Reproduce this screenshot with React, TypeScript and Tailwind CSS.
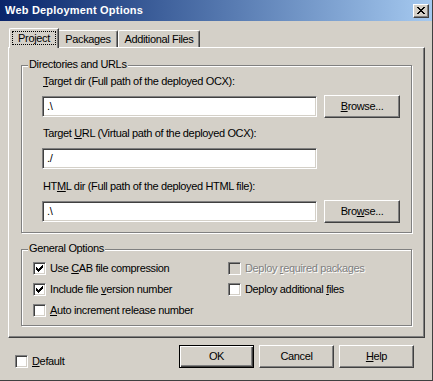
import type { ReactNode } from 'react';

const raised =
  'border border-t-white border-l-white border-r-[#404040] border-b-[#404040] shadow-[inset_-1px_-1px_0_#808080]';
const sunken =
  'border border-t-[#808080] border-l-[#808080] border-r-white border-b-white shadow-[inset_1px_1px_0_#404040,inset_-1px_-1px_0_#d4d0c8]';

const Key = ({ children }: { children: ReactNode }) => <span className="underline underline-offset-[1px]">{children}</span>;

const CheckMark = () => (
  <svg width="7" height="7" viewBox="0 0 7 7" shapeRendering="crispEdges">
    <path
      d="M0 2h1v3H0z M1 3h1v3H1z M2 4h1v3H2z M3 3h1v3H3z M4 2h1v3H4z M5 1h1v3H5z M6 0h1v3H6z"
      fill="#000"
    />
  </svg>
);

const CloseGlyph = () => (
  <svg width="8" height="7" viewBox="0 0 8 7" shapeRendering="crispEdges">
    <path
      d="M0 0h2v1H0zM6 0h2v1H6zM1 1h2v1H1zM5 1h2v1H5zM2 2h4v1H2zM3 3h2v1H3zM2 4h4v1H2zM1 5h2v1H1zM5 5h2v1H5zM0 6h2v1H0zM6 6h2v1H6z"
      fill="#000"
    />
  </svg>
);

function CheckBox({
  checked = false,
  disabled = false,
  children,
}: {
  checked?: boolean;
  disabled?: boolean;
  children: ReactNode;
}) {
  return (
    <div className="flex items-center h-[13px]">
      <span
        className={`w-[13px] h-[13px] shrink-0 flex items-center justify-center ${sunken} ${
          disabled ? 'bg-[#d4d0c8]' : 'bg-white'
        }`}
      >
        {checked && <CheckMark />}
      </span>
      <span
        className={`ml-[4px] whitespace-nowrap ${
          disabled ? 'text-[#808080] [text-shadow:1px_1px_0_#fff]' : ''
        }`}
      >
        {children}
      </span>
    </div>
  );
}

function Button({ children, isDefault = false, className = '' }: { children: ReactNode; isDefault?: boolean; className?: string }) {
  const edge = isDefault
    ? 'border border-black shadow-[inset_1px_1px_0_#fff,inset_-1px_-1px_0_#404040,inset_-2px_-2px_0_#808080]'
    : raised;
  return (
    <div className={`h-[23px] flex items-center justify-center bg-[#d4d0c8] ${edge} ${className}`}>
      <span className="mt-[-1px]">{children}</span>
    </div>
  );
}

function GroupBox({ title, className = '', children }: { title: string; className?: string; children: ReactNode }) {
  return (
    <div
      className={`relative w-[391px] border border-[#808080] shadow-[inset_1px_1px_0_#fff,1px_1px_0_#fff] ${className}`}
    >
      <span className="absolute left-[6px] top-[-8px] px-[1px] bg-[#d4d0c8] leading-[13px]">{title}</span>
      {children}
    </div>
  );
}

function PathField({ label, value, browse }: { label: ReactNode; value: string; browse?: ReactNode }) {
  return (
    <div className="flex flex-col">
      <div className="ml-[1px] h-[13px] leading-[13px]">{label}</div>
      <div className="mt-[8px] h-[21px] flex items-center">
        <div className={`w-[275px] h-[21px] bg-white flex items-center pl-[4px] ${sunken}`}>{value}</div>
        {browse && <Button className="ml-[7px] w-[76px]">{browse}</Button>}
      </div>
    </div>
  );
}

export default function App() {
  return (
    <div className="w-[433px] h-[381px] overflow-hidden bg-[#d4d0c8] border-r border-b border-[#404040] font-['Liberation_Sans',Arial,sans-serif] text-[11px] leading-[13px] tracking-[-0.35px] text-black select-none">
      {/* Title bar */}
      <div className="h-[21px] flex items-center pl-[5px] pr-[3px] bg-gradient-to-r from-[#0a246a] to-[#a6caf0]">
        <span className="text-white font-bold text-[11px] tracking-[0.2px]">Web Deployment Options</span>
        <div className={`ml-auto w-[16px] h-[14px] bg-[#d4d0c8] flex items-center justify-center ${raised}`}>
          <CloseGlyph />
        </div>
      </div>

      {/* Tabs */}
      <div className="mt-[7px] ml-[8px] h-[19px] flex items-end relative z-10">
        <div className="ml-[1px] mb-[-1px] w-[50px] h-[20px] bg-[#d4d0c8] border-t border-l border-t-white border-l-white border-r border-r-[#404040] shadow-[inset_-1px_0_0_#808080] rounded-tl-[2px] p-[2px] pb-[3px]">
          <div className="w-full h-full border border-dotted border-black flex items-center justify-center">Project</div>
        </div>
        <div className="w-[59px] h-[17px] border-t border-t-white border-r border-r-[#404040] shadow-[inset_-1px_0_0_#808080] flex items-center justify-center rounded-tr-[2px]">
          Packages
        </div>
        <div className="w-[82px] h-[17px] border-t border-l border-t-white border-l-white border-r border-r-[#404040] shadow-[inset_-1px_0_0_#808080] flex items-center justify-center rounded-t-[2px]">
          Additional Files
        </div>
      </div>

      {/* Tab panel */}
      <div className={`ml-[8px] w-[417px] h-[291px] pl-[12px] pt-[17px] ${raised}`}>
        <GroupBox title="Directories and URLs" className="h-[168px] pl-[20px] pt-[9px]">
          <PathField
            label={
              <>
                <Key>T</Key>arget dir (Full path of the deployed OCX):
              </>
            }
            value=".\"
            browse={
              <>
                <Key>B</Key>rowse...
              </>
            }
          />
          <div className="mt-[10px]">
            <PathField
              label={
                <>
                  Target <Key>U</Key>RL (Virtual path of the deployed OCX):
                </>
              }
              value="./"
            />
          </div>
          <div className="mt-[11px]">
            <PathField
              label={
                <>
                  HT<Key>M</Key>L dir (Full path of the deployed HTML file):
                </>
              }
              value=".\"
              browse={
                <>
                  Bro<Key>w</Key>se...
                </>
              }
            />
          </div>
        </GroupBox>

        <GroupBox title="General Options" className="mt-[16px] h-[77px] pl-[11px] pt-[12px]">
          <div className="flex">
            <div className="w-[195px] flex flex-col gap-[8px]">
              <CheckBox checked>
                Use <Key>C</Key>AB file compression
              </CheckBox>
              <CheckBox checked>
                Include file <Key>v</Key>ersion number
              </CheckBox>
              <CheckBox>
                <Key>A</Key>uto increment release number
              </CheckBox>
            </div>
            <div className="flex flex-col gap-[8px]">
              <CheckBox disabled>
                Deploy <Key>r</Key>equired packages
              </CheckBox>
              <CheckBox>
                Deploy additional <Key>f</Key>iles
              </CheckBox>
            </div>
          </div>
        </GroupBox>
      </div>

      {/* Bottom row */}
      <div className="mt-[7px] h-[23px] flex items-start pl-[15px] pr-[18px]">
        <div className="mt-[10px]">
          <CheckBox>
            <Key>D</Key>efault
          </CheckBox>
        </div>
        <div className="ml-auto flex gap-[5px]">
          <Button isDefault className="w-[75px]">
            OK
          </Button>
          <Button className="w-[75px]">Cancel</Button>
          <Button className="w-[75px]">
            <Key>H</Key>elp
          </Button>
        </div>
      </div>
    </div>
  );
}
